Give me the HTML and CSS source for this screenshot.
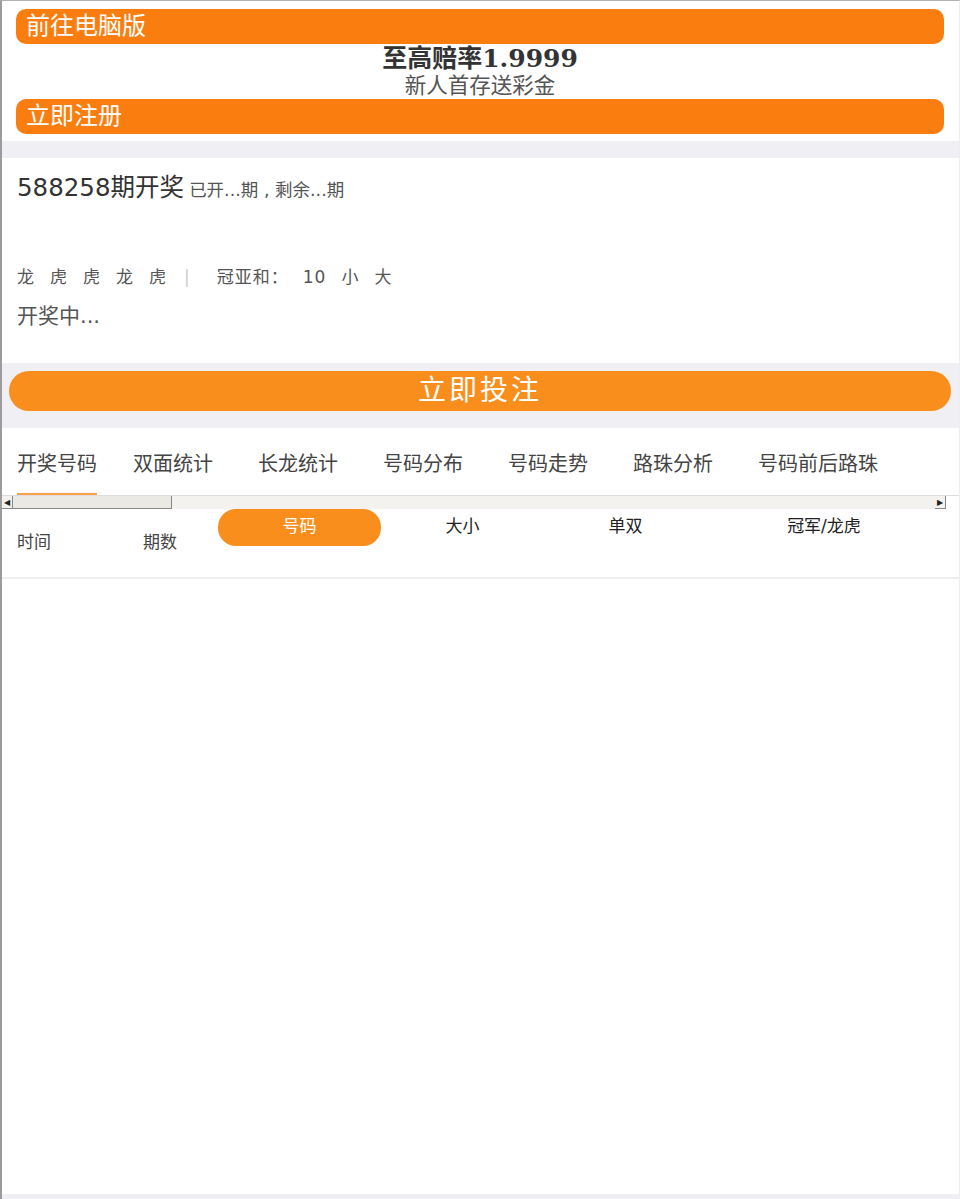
FILE: index.html
```html
<!DOCTYPE html>
<html lang="zh-CN">
<head>
    <meta charset="UTF-8">
    <meta name="viewport" content="width=device-width, initial-scale=1.0">
    <title>开奖</title>
    <link rel="stylesheet" href="styles.css">
</head>
<body>

    <div class="page">

        <!-- Top promo -->
        <div class="promo">
            <a class="promo-btn" href="#">前往电脑版</a>
            <div class="promo-title">至高赔率1.9999</div>
            <div class="promo-sub">新人首存送彩金</div>
            <a class="promo-btn" href="#">立即注册</a>
        </div>

        <!-- Current draw -->
        <div class="draw">
            <div class="draw-head">
                <span class="draw-no">588258期开奖</span>
                <span class="draw-info">已开...期 , 剩余...期</span>
            </div>
            <div class="draw-result">
                <span>龙</span><span>虎</span><span>虎</span><span>龙</span><span>虎</span>
                <span class="sep">|</span>
                <span class="sum-label">冠亚和：</span>
                <span>10</span><span>小</span><span>大</span>
            </div>
            <div class="draw-status">开奖中...</div>
        </div>

        <!-- Bet button -->
        <div class="bet">
            <a class="bet-btn" href="#">立即投注</a>
        </div>

        <!-- Tabs -->
        <div class="tabs">
            <div class="tab active">开奖号码</div>
            <div class="tab">双面统计</div>
            <div class="tab">长龙统计</div>
            <div class="tab">号码分布</div>
            <div class="tab">号码走势</div>
            <div class="tab">路珠分析</div>
            <div class="tab">号码前后路珠</div>
        </div>
        <div class="scrollbar">
            <div class="sb-arrow">&#9664;</div>
            <div class="sb-thumb"></div>
            <div class="sb-track"></div>
            <div class="sb-arrow">&#9654;</div>
            <div class="sb-corner"></div>
        </div>

        <!-- Table header -->
        <div class="table-head">
            <div class="col col-time">时间</div>
            <div class="col col-no">期数</div>
            <div class="col col-num"><span class="pill">号码</span></div>
            <div class="col col-size">大小</div>
            <div class="col col-odd">单双</div>
            <div class="col col-dt">冠军/龙虎</div>
        </div>

        <div class="table-body"></div>
    </div>

</body>
</html>
```

FILE: styles.css
```css
body {
    margin: 0;
    font-family: "DejaVu Sans", "Noto Sans CJK SC", sans-serif;
    color: #333;
    background-color: #fff;
}

a {
    text-decoration: none;
}

.page {
    border-left: 2px solid #9c9c9c;
    border-top: 1px solid #b0b0b0;
    border-right: 1px solid #eee;
    background-color: #efeff4;
    height: 1199px;
    box-sizing: border-box;
    display: flex;
    flex-direction: column;
}

/* Top promo */
.promo {
    background-color: #fff;
    padding: 8px 15px 7px 14px;
}

.promo-btn {
    display: block;
    height: 35px;
    line-height: 35px;
    border-radius: 10px;
    background-color: #fa7d10;
    color: #fff;
    font-size: 24px;
    padding-left: 10px;
}

.promo-title {
    text-align: center;
    font-family: "DejaVu Serif", "Noto Sans CJK SC", serif;
    font-weight: bold;
    font-size: 25px;
    line-height: 28px;
    color: #333;
    margin-top: 1px;
}

.promo-sub {
    text-align: center;
    font-size: 21.5px;
    line-height: 26px;
    color: #555;
}

/* Draw */
.draw {
    background-color: #fff;
    margin-top: 17px;
    height: 205px;
    padding: 15px 15px 0 15px;
    box-sizing: border-box;
}

.draw-head {
    line-height: 30px;
}

.draw-no {
    font-size: 24.5px;
    color: #333;
}

.draw-info {
    font-size: 17.5px;
    color: #555;
}

.draw-result {
    margin-top: 59px;
    display: flex;
    align-items: center;
    font-size: 17px;
    color: #555;
    line-height: 24px;
    letter-spacing: 1px;
}

.draw-result span {
    margin-right: 15px;
}

.draw-result .sep {
    color: #ccc;
    margin: 0 26px 0 2px;
}

.draw-result .sum-label {
    margin-right: 14px;
}

.draw-status {
    margin-top: 13px;
    font-size: 21px;
    color: #555;
    line-height: 28px;
}

/* Bet */
.bet {
    padding: 8px 8px 17px 7px;
}

.bet-btn {
    display: block;
    height: 40px;
    line-height: 40px;
    border-radius: 20px;
    background-color: #f98e1d;
    color: #fff;
    text-align: center;
    font-size: 28px;
    letter-spacing: 3px;
}

/* Tabs */
.tabs {
    background-color: #fff;
    height: 67px;
    display: flex;
    padding-left: 15px;
    box-sizing: border-box;
}

.tab {
    font-size: 20px;
    color: #444;
    padding-top: 22px;
    margin-right: 45px;
    line-height: 28px;
    box-sizing: border-box;
    height: 67px;
    white-space: nowrap;
}

.tab.active {
    margin-right: 36px;
    border-bottom: 2px solid #f8a04a;
}

.scrollbar {
    height: 14px;
    display: flex;
    background-color: #f3f2ee;
    border-top: 1px solid #ddd;
    box-sizing: border-box;
}

.sb-arrow {
    width: 10px;
    font-size: 8px;
    line-height: 13px;
    text-align: center;
    color: #222;
    border-right: 1px solid #888;
    border-bottom: 1px solid #888;
}

.sb-thumb {
    width: 158px;
    background-color: #ebe9e4;
    border-right: 1px solid #888;
    border-bottom: 1px solid #888;
}

.sb-track {
    flex: 1;
}

.sb-corner {
    width: 13px;
    background-color: #fff;
}

/* Table header */
.table-head {
    background-color: #fff;
    height: 68px;
    display: flex;
    border-bottom: 2px solid #eee;
    font-size: 17px;
}

.col {
    white-space: nowrap;
}

.col-time,
.col-no {
    color: #444;
    padding-top: 21px;
    line-height: 24px;
}

.col-time {
    padding-left: 15px;
    width: 126px;
}

.col-no {
    width: 75px;
}

.col-num {
    width: 163px;
}

.pill {
    display: block;
    height: 37px;
    line-height: 34px;
    border-radius: 18px;
    background-color: #f98e1d;
    color: #fff;
    text-align: center;
}

.col-size,
.col-odd,
.col-dt {
    color: #222;
    line-height: 34px;
    text-align: center;
}

.col-size,
.col-odd {
    width: 163px;
}

.col-dt {
    width: 234px;
}

.table-body {
    background-color: #fff;
    flex: 1;
    margin-bottom: 5px;
}
```
